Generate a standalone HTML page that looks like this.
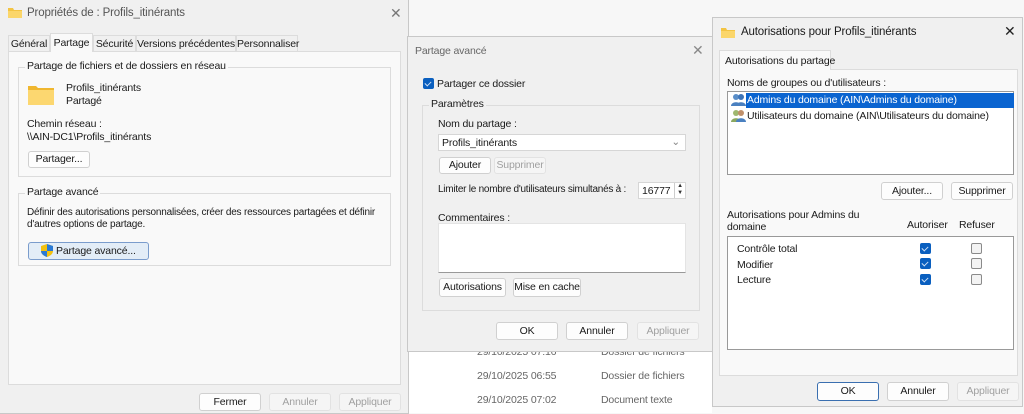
<!DOCTYPE html>
<html><head><meta charset="utf-8"><style>
*{box-sizing:border-box;margin:0;padding:0}
body{width:1024px;height:413px;overflow:hidden;background:#f7f7f7;font-family:"Liberation Sans",sans-serif;font-size:10.5px;letter-spacing:-0.15px;color:#1a1a1a;position:relative}
.a{position:absolute;white-space:nowrap}
.win{position:absolute;background:#f0f0f0;border:1px solid #c8c8c8}
.btn{position:absolute;background:#fdfdfd;border:1px solid #d0d0d0;border-radius:3px;text-align:center;color:#1a1a1a;white-space:nowrap}
.dis{color:#a0a0a0;background:#f5f5f5;border-color:#e2e2e2}
.grp{position:absolute;border:1px solid #dcdcdc}
.gl{position:absolute;top:-8px;left:6px;padding:0 2px;background:inherit;white-space:nowrap}
.cb{position:absolute;width:11px;height:11px;border-radius:2px;background:#0a5fbf}
.cb:after{content:"";position:absolute;left:3px;top:2px;width:3px;height:5px;border:solid #cfe0f5;border-width:0 1px 1px 0;transform:rotate(45deg)}
.ce{position:absolute;width:11px;height:11px;border-radius:2px;border:1px solid #8a8a8a;background:#f3f3f3}
.x{position:absolute;font-size:14px;color:#777}
.tab{position:absolute;height:16px;border:1px solid #dcdcdc;border-bottom:none;padding:2px 0;text-align:center;background:#f0f0f0;white-space:nowrap}
</style></head><body>

<div class="a" style="left:408px;top:351px;width:304px;height:62px;background:#fff"></div>
<div class="a" style="left:477px;top:346px;color:#666">29/10/2025 07:16</div>
<div class="a" style="left:601px;top:346px;color:#666">Dossier de fichiers</div>
<div class="a" style="left:477px;top:370px;color:#666">29/10/2025 06:55</div>
<div class="a" style="left:601px;top:370px;color:#666">Dossier de fichiers</div>
<div class="a" style="left:477px;top:394px;color:#666">29/10/2025 07:02</div>
<div class="a" style="left:601px;top:394px;color:#666">Document texte</div>

<!-- dialog 1 -->
<div class="win" style="left:-1px;top:-1px;width:410px;height:415px;background:#f0f0f0">
  <svg class="a" style="left:8px;top:7px" width="14" height="11"><path d="M0 1h5l1 2h8v8H0z" fill="#f3c443"/><path d="M0 4h14v7H0z" fill="#fbd66a"/></svg>
  <div class="a" style="left:27px;top:7px;font-size:11.5px;color:#555">Propriétés de : Profils_itinérants</div>
  <div class="x" style="left:390px;top:5px">✕</div>
  <div class="a" style="left:8px;top:51px;width:393px;height:334px;background:#f9f9f9;border:1px solid #dcdcdc"></div>
  <div class="tab" style="left:8px;top:35px;width:42px">Général</div>
  <div class="tab" style="left:50px;top:33px;width:43px;height:19px;padding-top:3px;background:#f9f9f9">Partage</div>
  <div class="tab" style="left:93px;top:35px;width:43px">Sécurité</div>
  <div class="tab" style="left:136px;top:35px;width:100px">Versions précédentes</div>
  <div class="tab" style="left:236px;top:35px;width:62px">Personnaliser</div>
  <div class="grp" style="left:18px;top:67px;width:373px;height:110px;background:#f9f9f9"><span class="gl">Partage de fichiers et de dossiers en réseau</span></div>
  <svg class="a" style="left:28px;top:86px" width="26" height="19"><path d="M0 0h8l2 2h16v17H0z" fill="#f0b72f"/><path d="M0 4h26v15H0z" fill="#fcd770"/></svg>
  <div class="a" style="left:66px;top:82px">Profils_itinérants</div>
  <div class="a" style="left:66px;top:95px">Partagé</div>
  <div class="a" style="left:27px;top:118px">Chemin réseau :</div>
  <div class="a" style="left:27px;top:131px">\\AIN-DC1\Profils_itinérants</div>
  <div class="btn" style="left:28px;top:151px;width:62px;height:17px;line-height:15px">Partager...</div>
  <div class="grp" style="left:18px;top:193px;width:373px;height:73px;background:#f9f9f9"><span class="gl">Partage avancé</span></div>
  <div class="a" style="left:27px;top:207px;font-size:10px;letter-spacing:-0.2px">Définir des autorisations personnalisées, créer des ressources partagées et définir</div>
  <div class="a" style="left:27px;top:219px;font-size:10px;letter-spacing:-0.2px">d'autres options de partage.</div>
  <div class="btn" style="left:28px;top:242px;width:121px;height:18px;line-height:16px;background:#e3edf7;border-color:#7a9ccc">
    <svg style="vertical-align:-3px" width="12" height="13"><path d="M6 0L12 2v5c0 3-3 5-6 6-3-1-6-3-6-6V2z" fill="#f3c10f"/><path d="M6 0L12 2v5H6zM0 7h6v6c-3-1-6-3-6-6z" fill="#2a7ad5"/></svg> Partage avancé...</div>
  <div class="btn" style="left:199px;top:393px;width:62px;height:18px;line-height:16px">Fermer</div>
  <div class="btn dis" style="left:269px;top:393px;width:62px;height:18px;line-height:16px">Annuler</div>
  <div class="btn dis" style="left:339px;top:393px;width:62px;height:18px;line-height:16px">Appliquer</div>
</div>

<!-- dialog 2 -->
<div class="win" style="left:407px;top:36px;width:306px;height:316px;background:#f0f0f0">
  <div class="a" style="left:7px;top:8px;color:#666">Partage avancé</div>
  <div class="x" style="left:284px;top:5px;color:#888">✕</div>
  <div class="cb" style="left:15px;top:41px"></div>
  <div class="a" style="left:29px;top:41px">Partager ce dossier</div>
  <div class="grp" style="left:14px;top:68px;width:278px;height:206px;background:#f0f0f0"><span class="gl">Paramètres</span></div>
  <div class="a" style="left:30px;top:81px">Nom du partage :</div>
  <div class="a" style="left:30px;top:97px;width:248px;height:17px;background:#fff;border:1px solid #d6d6d6;padding:2px 3px">Profils_itinérants<span style="position:absolute;right:5px;top:1px;color:#888">⌄</span></div>
  <div class="btn" style="left:31px;top:120px;width:52px;height:17px;line-height:15px">Ajouter</div>
  <div class="btn dis" style="left:86px;top:120px;width:52px;height:17px;line-height:15px">Supprimer</div>
  <div class="a" style="left:30px;top:147px;font-size:10px;letter-spacing:-0.25px">Limiter le nombre d'utilisateurs simultanés à :</div>
  <div class="a" style="left:230px;top:145px;width:48px;height:17px;background:#fff;border:1px solid #d6d6d6;padding:2px 3px">16777<span style="position:absolute;right:0;top:0;width:11px;height:15px;border-left:1px solid #ccc;font-size:6px;line-height:7px;text-align:center;color:#333">▲<br>▼</span></div>
  <div class="a" style="left:30px;top:175px">Commentaires :</div>
  <div class="a" style="left:30px;top:186px;width:248px;height:50px;background:#fff;border:1px solid #e4e4e4;border-bottom-color:#999"></div>
  <div class="btn" style="left:31px;top:241px;width:67px;height:19px;line-height:17px">Autorisations</div>
  <div class="btn" style="left:105px;top:241px;width:68px;height:19px;line-height:17px">Mise en cache</div>
  <div class="btn" style="left:88px;top:285px;width:62px;height:18px;line-height:16px">OK</div>
  <div class="btn" style="left:158px;top:285px;width:62px;height:18px;line-height:16px">Annuler</div>
  <div class="btn dis" style="left:229px;top:285px;width:62px;height:18px;line-height:16px">Appliquer</div>
</div>

<!-- dialog 3 -->
<div class="win" style="left:712px;top:17px;width:311px;height:390px;background:#f0f0f0">
  <svg class="a" style="left:8px;top:9px" width="14" height="11"><path d="M0 1h5l1 2h8v8H0z" fill="#f3c443"/><path d="M0 4h14v7H0z" fill="#fbd66a"/></svg>
  <div class="a" style="left:28px;top:8px;font-size:11.5px">Autorisations pour Profils_itinérants</div>
  <div class="x" style="left:291px;top:5px;color:#222">✕</div>
  <div class="a" style="left:6px;top:51px;width:299px;height:307px;background:#f9f9f9;border:1px solid #dcdcdc"></div>
  <div class="a" style="left:6px;top:32px;width:112px;height:20px;background:#f9f9f9;border:1px solid #dcdcdc;border-bottom:none;padding:4px 5px">Autorisations du partage</div>
  <div class="a" style="left:14px;top:59px">Noms de groupes ou d'utilisateurs :</div>
  <div class="a" style="left:14px;top:73px;width:287px;height:84px;background:#fff;border:1px solid #999"></div>
  <div class="a" style="left:33px;top:75px;width:268px;height:15px;background:#0a64d0"></div>
  <svg class="a" style="left:18px;top:75px" width="15" height="13"><circle cx="5" cy="4" r="3" fill="#5a8ec8"/><circle cx="10" cy="4" r="3" fill="#3d74b8"/><path d="M0 13c0-5 10-5 10 0zM5 13c0-5 10-5 10 0z" fill="#4a80c0"/></svg>
  <div class="a" style="left:34px;top:76px;color:#fff">Admins du domaine (AIN\Admins du domaine)</div>
  <svg class="a" style="left:18px;top:91px" width="15" height="13"><circle cx="5" cy="4" r="3" fill="#9fb870"/><circle cx="10" cy="4" r="3" fill="#c0906a"/><path d="M0 13c0-5 10-5 10 0z" fill="#8aa860"/><path d="M5 13c0-5 10-5 10 0z" fill="#4a80c0"/></svg>
  <div class="a" style="left:34px;top:92px">Utilisateurs du domaine (AIN\Utilisateurs du domaine)</div>
  <div class="btn" style="left:168px;top:164px;width:62px;height:18px;line-height:16px">Ajouter...</div>
  <div class="btn" style="left:238px;top:164px;width:62px;height:18px;line-height:16px">Supprimer</div>
  <div class="a" style="left:14px;top:191px;line-height:12px">Autorisations pour Admins du<br>domaine</div>
  <div class="a" style="left:194px;top:201px">Autoriser</div>
  <div class="a" style="left:246px;top:201px">Refuser</div>
  <div class="a" style="left:14px;top:218px;width:287px;height:114px;background:#fff;border:1px solid #999"></div>
  <div class="a" style="left:24px;top:225px">Contrôle total</div>
  <div class="a" style="left:24px;top:241px">Modifier</div>
  <div class="a" style="left:24px;top:256px">Lecture</div>
  <div class="cb" style="left:207px;top:225px"></div><div class="ce" style="left:258px;top:225px"></div>
  <div class="cb" style="left:207px;top:240px"></div><div class="ce" style="left:258px;top:240px"></div>
  <div class="cb" style="left:207px;top:256px"></div><div class="ce" style="left:258px;top:256px"></div>
  <div class="btn" style="left:104px;top:364px;width:62px;height:19px;line-height:17px;border-color:#3a6fb0">OK</div>
  <div class="btn" style="left:174px;top:364px;width:62px;height:19px;line-height:17px">Annuler</div>
  <div class="btn dis" style="left:244px;top:364px;width:62px;height:19px;line-height:17px">Appliquer</div>
</div>
</body></html>
